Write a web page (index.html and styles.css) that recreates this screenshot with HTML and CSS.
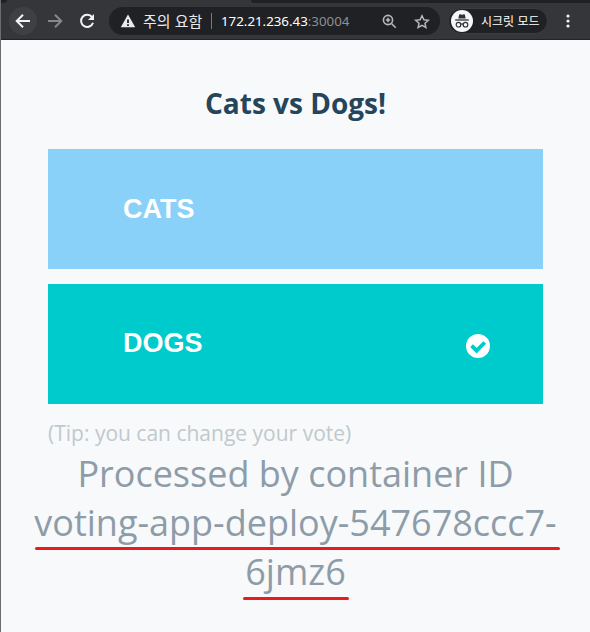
FILE: index.html
```html
<!DOCTYPE html>
<html lang="ko">
<head>
<meta charset="utf-8">
<title>Cats vs Dogs!</title>
<link rel="stylesheet" href="styles.css">
</head>
<body>
<div class="window">
  <header class="browser">
    <div class="tabstrip"><span class="tab-edge"></span><span class="tab-rest"></span></div>
    <nav class="toolbar">
      <span class="nav-button active"><svg width="16" height="16" viewBox="0 0 16 16"><path d="M15 8H2M8 1.7 1.7 8 8 14.3" stroke="#f1f3f4"/></svg></span>
      <span class="nav-button"><svg width="16" height="16" viewBox="0 0 16 16"><path d="M1 8h13M8 1.7 14.3 8 8 14.3" stroke="#85878b"/></svg></span>
      <span class="nav-button reload"><svg width="16" height="16" viewBox="0 0 16 16"><path d="M13.1 4.2A6.1 6.1 0 1 0 14 9.7" stroke="#f1f3f4"/><path d="M15 1v6H9z" fill="#f1f3f4" stroke="none"/></svg></span>
      <div class="address">
        <svg class="warning" width="16" height="14" viewBox="0 0 16 14"><path d="M8 .5.8 13.2h14.4z" fill="#e8eaed" stroke="none"/><path d="M8 5.5v3.4M8 10.3V12" stroke="#202124" stroke-width="1.8"/></svg>
        <span class="notice">주의 요함</span>
        <span class="divider"></span>
        <span class="host">172.21.236.43<span class="port">:30004</span></span>
        <svg class="magnifier" width="15" height="15" viewBox="0 0 15 15"><g stroke="#b5b7ba" stroke-width="1.6"><circle cx="6" cy="6" r="4.6"/><path d="M9.5 9.5l4.2 4.2M6 3.8v4.4M3.8 6h4.4" /></g></svg>
        <svg class="star" width="16" height="15" viewBox="0 0 16 15"><path d="M8 1.8l1.9 4 4.4.5-3.3 3 .9 4.2L8 11.4l-3.9 2.1.9-4.2-3.3-3 4.4-.5z" stroke="#b5b7ba" stroke-width="1.5"/></svg>
      </div>
      <div class="profile">
        <svg width="22" height="22" viewBox="0 0 22 22"><circle cx="11" cy="11" r="11" fill="#f5f6f7" stroke="none"/><path d="M7.3 8.4 8.2 4.6q.2-.6.8-.4l2 .5 2-.5q.6-.2.8.4l.9 3.8z" fill="#303134" stroke="none"/><path d="M4.2 10h13.6" stroke="#303134" stroke-width="1.3"/><g stroke="#303134" stroke-width="1.2"><circle cx="7.5" cy="14.7" r="2.3"/><circle cx="14.5" cy="14.7" r="2.3"/><path d="M9.8 14.2q1.2-.7 2.4 0"/></g></svg>
        <span>시크릿 모드</span>
      </div>
      <svg class="menu" width="4" height="14" viewBox="0 0 4 14"><g fill="#f1f3f4" stroke="none"><circle cx="2" cy="2" r="1.6"/><circle cx="2" cy="7" r="1.6"/><circle cx="2" cy="12" r="1.6"/></g></svg>
    </nav>
  </header>
  <main class="page">
    <h1>Cats vs Dogs!</h1>
    <form class="choices">
      <button type="button" class="choice cats">CATS</button>
      <button type="button" class="choice dogs">DOGS
        <svg class="check" width="24" height="24" viewBox="0 0 24 24"><circle cx="12" cy="12" r="12" fill="#fff" stroke="none"/><path d="M5.6 11.7l5 5 8.1-8.2" stroke="#00cbcc" stroke-width="3.8"/></svg>
      </button>
    </form>
    <p class="tip">(Tip: you can change your vote)</p>
    <p class="host-id">Processed by container ID<br><span class="marked first">voting-app-deploy-547678ccc7-</span><br><span class="marked second">6jmz6</span></p>
  </main>
</div>
</body>
</html>
```

FILE: styles.css
```css
* { box-sizing: border-box; }
body { margin: 0; background: #f7f8f9; font-family: "Open Sans", sans-serif; }
svg { display: block; flex: none; fill: none; stroke-width: 2; }
.window { height: 632px; overflow: hidden; border-left: 1px solid #6c6d6f; background: #f7f9fa; }
.browser { height: 40px; background: #35363a; border-bottom: 1px solid #222326; }
.tabstrip { height: 3px; display: flex; justify-content: space-between; }
.tab-edge { width: 6px; background: #202124; border-bottom-right-radius: 6px; }
.tab-rest { width: 339px; background: #202124; border-bottom-left-radius: 5px; }
.toolbar { height: 36px; padding-left: 8px; display: flex; align-items: center; }
.nav-button { width: 28px; height: 28px; margin-right: 4px; border-radius: 50%; display: grid; place-items: center; }
.active { background: #3f4044; }
.address { width: 331px; height: 28px; margin-left: 4px; padding: 0 10px 0 11px; display: flex; align-items: center; border-radius: 14px; background: #202124; white-space: nowrap; }
.notice { margin-left: 7px; width: 61px; font: 15px/20px "Noto Sans CJK KR", sans-serif; color: #e8eaed; }
.divider { width: 1px; height: 16px; margin: 0 9px 0 7px; background: #77797d; }
.host { width: 129px; font: 13.3px/20px "Noto Sans", sans-serif; color: #fff; }
.port { color: #8e9094; }
.magnifier { margin-left: auto; }
.star { margin-left: 17px; }
.profile { width: 100px; height: 26px; margin-left: 8px; padding-left: 2px; display: flex; align-items: center; gap: 8px; border: 1px solid #3b3c40; border-radius: 13px; background: #202124; color: #fff; font: 12px/18px "Noto Sans CJK KR", sans-serif; white-space: nowrap; }
.menu { margin-left: 18px; }
.page { padding: 43px 32px 0; }
h1 { margin: 0 0 26px; height: 40px; font-size: 28px; line-height: 40px; text-align: center; color: #24455a; }
.choices { width: 495px; margin: 0 15px; display: grid; gap: 15px; }
.choice { height: 120px; padding: 0 53px 2px 75px; display: flex; align-items: center; justify-content: space-between; border: 0; color: #fff; font: bold 27px "Liberation Sans", sans-serif; text-align: left; }
.cats { padding-bottom: 0; background: #8ad1fa; }
.dogs { background: #00cbcc; }
.check { margin-top: 6px; }
.tip { margin: 15px 0 0 15px; font-size: 21px; line-height: 29px; color: #c0c9ce; white-space: nowrap; }
.host-id { margin: 1px 0 0; font-size: 36px; line-height: 49px; text-align: center; color: #8d9ca8; white-space: nowrap; }
.marked { position: relative; }
.marked::after { content: ""; position: absolute; left: 1px; right: -3px; bottom: -3px; height: 3px; border-radius: 2px; background: #e81c1f; }
.second::after { left: -2px; right: -3px; bottom: -4px; }
```
